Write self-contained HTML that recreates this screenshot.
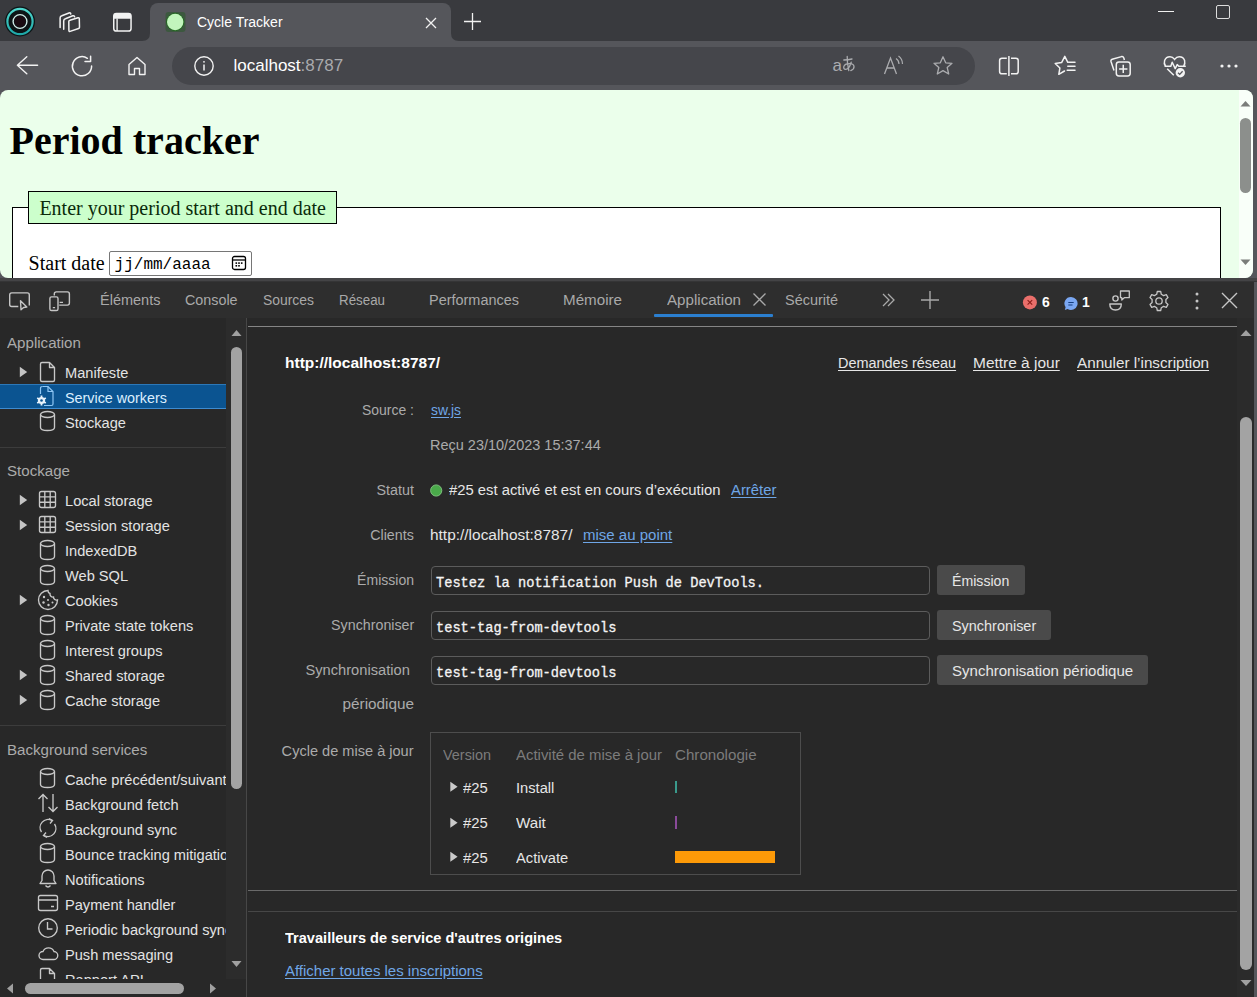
<!DOCTYPE html>
<html><head><meta charset="utf-8"><title>Cycle Tracker</title>
<style>
html,body{margin:0;padding:0;width:1257px;height:997px;overflow:hidden;background:#282828;}
.t{position:absolute;white-space:pre;line-height:1;}
.b{position:absolute;box-sizing:border-box;}
</style></head><body>
<div class="b" style="left:0px;top:0px;width:1257px;height:42px;background:#393a3e;"></div><div class="b" style="left:0px;top:41px;width:1257px;height:49px;background:#55565b;"></div><div class="b" style="left:150px;top:3px;width:301px;height:39px;background:#55565b;border-radius:8px 8px 0 0;"></div><svg class="b" style="left:142px;top:33px;" width="8" height="8" viewBox="0 0 8 8" fill="none"><path d="M0 8 Q8 8 8 0 L8 8 Z" fill="#55565b"/></svg><svg class="b" style="left:451px;top:33px;" width="8" height="8" viewBox="0 0 8 8" fill="none"><path d="M8 8 Q0 8 0 0 L0 8 Z" fill="#55565b"/></svg><svg class="b" style="left:4px;top:6px;" width="32" height="32" viewBox="0 0 32 32" fill="none"><defs><linearGradient id="eg" x1="0" y1="0" x2="0" y2="1"><stop offset="0" stop-color="#4fd6cc"/><stop offset="1" stop-color="#1fa8a8"/></linearGradient></defs><circle cx="16" cy="15.5" r="15" fill="#0c1416"/><circle cx="16" cy="15.5" r="12.6" stroke="url(#eg)" stroke-width="2.2"/><circle cx="16" cy="15.5" r="6.9" stroke="#cfe9e6" stroke-width="1.4"/><circle cx="16" cy="15.5" r="5.5" fill="#1a0b12"/></svg><svg class="b" style="left:55px;top:8px;" width="30" height="28" viewBox="0 0 30 28" fill="none"><g stroke="#f2f2f2" stroke-width="1.5" stroke-linejoin="round" stroke-linecap="round" fill="none"><path d="M5.1 19.6 V10 Q5.1 8.3 6.8 7.8 L14 5 Q15.5 4.5 15.8 6"/><path d="M8.7 21.3 V13 Q8.7 11.2 10.4 10.7 L17.8 7.8 Q19.3 7.3 19.6 8.8"/><path d="M14.9 12.3 L23 9.7 Q24.2 9.4 24.3 10.6 L24.5 19.3 Q24.5 20.2 23.6 20.5 L15.1 23.4 Q13.9 23.8 13.9 22.6 L13.8 13.6 Q13.8 12.6 14.9 12.3 Z"/></g></svg><svg class="b" style="left:112px;top:12px;" width="21" height="21" viewBox="0 0 21 21" fill="none"><rect x="1.75" y="1.45" width="17.3" height="17.6" rx="2.6" stroke="#f2f2f2" stroke-width="1.5"/><path d="M1.75 4 Q1.75 1.45 4.3 1.45 H16.5 Q19.05 1.45 19.05 4 V6.7 H1.75 Z" fill="#f2f2f2"/><path d="M5.1 6.5 V19" stroke="#f2f2f2" stroke-width="1.4"/></svg><svg class="b" style="left:163px;top:10px;" width="25" height="25" viewBox="0 0 25 25" fill="none"><rect x="2.5" y="2" width="20" height="20" rx="3" fill="#1f5a1c" opacity="0.45"/><circle cx="12.2" cy="12" r="9" fill="#1f6a1c"/><circle cx="12.2" cy="12" r="8.2" fill="#c2f5bd"/></svg><div class="t" style="top:14.87px;font-family:'Liberation Sans', sans-serif;font-size:14px;color:#ffffff;left:197.00px;">Cycle Tracker</div><svg class="b" style="left:425px;top:17px;" width="12" height="12" viewBox="0 0 12 12" fill="none"><path d="M1 1 L11 11 M11 1 L1 11" stroke="#f2f2f2" stroke-width="1.3"/></svg><svg class="b" style="left:463px;top:12px;" width="19" height="19" viewBox="0 0 19 19" fill="none"><path d="M9.5 1 V18 M1 9.5 H18" stroke="#f2f2f2" stroke-width="1.3"/></svg><div class="b" style="left:1158px;top:11px;width:16px;height:1px;background:#f0f0f0;"></div><div class="b" style="left:1216px;top:5px;width:14px;height:14px;border:1.3px solid #dcdcdc;border-radius:2px;"></div><svg class="b" style="left:15px;top:54px;" width="24" height="24" viewBox="0 0 24 24" fill="none"><path d="M2.4 11.2 H22.6 M2.4 11.2 L11.8 2.8 M2.4 11.2 L11.8 19.8" stroke="#f2f2f2" stroke-width="1.4" stroke-linecap="round" stroke-linejoin="round" fill="none"/></svg><svg class="b" style="left:70px;top:54px;" width="24" height="24" viewBox="0 0 24 24" fill="none"><path d="M17.4 4.3 A9.6 9.6 0 1 0 21.6 12" stroke="#f2f2f2" stroke-width="1.5" fill="none" stroke-linecap="round"/><path d="M20.6 2.3 V7.6 H15" stroke="#f2f2f2" stroke-width="1.5" fill="none" stroke-linecap="round" stroke-linejoin="round"/></svg><svg class="b" style="left:125px;top:54px;" width="24" height="24" viewBox="0 0 24 24" fill="none"><path d="M4 10.5 L12 3.5 L20 10.5 V20.5 H14.5 V14.5 H9.5 V20.5 H4 Z" stroke="#f2f2f2" stroke-width="1.4" stroke-linejoin="round" fill="none"/></svg><div class="b" style="left:172px;top:47px;width:803px;height:38px;background:#45464b;border-radius:19px;"></div><svg class="b" style="left:193px;top:55px;" width="22" height="22" viewBox="0 0 22 22" fill="none"><circle cx="11" cy="11" r="9.2" stroke="#f2f2f2" stroke-width="1.4"/><path d="M11 9.5 V15.5" stroke="#f2f2f2" stroke-width="1.5"/><circle cx="11" cy="6.8" r="0.9" fill="#f2f2f2"/></svg><div class="t" style="top:57.27px;font-family:'Liberation Sans', sans-serif;font-size:17px;color:#ffffff;left:233.50px;">localhost<span style="color:#a9aaad">:8787</span></div><div class="t" style="top:57.27px;font-family:'Liberation Sans', sans-serif;font-size:17px;color:#abacaf;left:832.50px;">a</div><svg class="b" style="left:842px;top:55px;" width="14" height="18" viewBox="0 0 14 18" fill="none"><g stroke="#abacaf" stroke-width="1.3" fill="none" stroke-linecap="round"><path d="M1.8 5 Q6 5 10 4"/><path d="M5.2 1.5 Q5 8 6.8 15.5"/><path d="M9.2 7.2 Q7 14.5 3.6 14.3 Q1.3 14.1 1.8 11.6 Q2.6 8.6 7.5 8.6 Q11.8 8.6 12 11.6 Q12.2 14.3 8.8 15.6"/></g></svg><svg class="b" style="left:882px;top:54px;" width="24" height="24" viewBox="0 0 24 24" fill="none"><path d="M2.5 20 L8.5 4 L14.5 20 M5 14 H12" stroke="#abacaf" stroke-width="1.3" fill="none"/><path d="M14 4.5 Q17 6.5 17 10" stroke="#abacaf" stroke-width="1.2" fill="none"/><path d="M16.5 2 Q20.5 5 20.5 10" stroke="#abacaf" stroke-width="1.2" fill="none"/></svg><svg class="b" style="left:931px;top:54px;" width="24" height="24" viewBox="0 0 24 24" fill="none"><path d="M12 2.8 L14.7 8.8 L21 9.3 L16.2 13.5 L17.7 20 L12 16.6 L6.3 20 L7.8 13.5 L3 9.3 L9.3 8.8 Z" stroke="#abacaf" stroke-width="1.3" stroke-linejoin="round" fill="none"/></svg><svg class="b" style="left:997px;top:54px;" width="24" height="24" viewBox="0 0 24 24" fill="none"><path d="M9.8 4.2 H5 Q2.6 4.2 2.6 6.6 V17.4 Q2.6 19.8 5 19.8 H9.8 M14 4.2 H18.8 Q21.2 4.2 21.2 6.6 V17.4 Q21.2 19.8 18.8 19.8 H14" stroke="#f2f2f2" stroke-width="1.5" fill="none"/><path d="M11.9 2 V22" stroke="#f2f2f2" stroke-width="1.5"/></svg><svg class="b" style="left:1050px;top:54px;" width="28" height="24" viewBox="0 0 28 24" fill="none"><path d="M14.5 17 L8.8 20.3 L9.9 14 L5.2 9.5 L11.6 8.6 L14.8 2.4 L17.8 8.3" stroke="#f2f2f2" stroke-width="1.5" stroke-linejoin="round" stroke-linecap="round" fill="none"/><path d="M18.6 8.3 H25 M17.8 12.3 H25 M17.2 16.3 H25" stroke="#f2f2f2" stroke-width="1.5" stroke-linecap="round"/></svg><svg class="b" style="left:1106px;top:52px;" width="28" height="28" viewBox="0 0 28 28" fill="none"><path d="M8 18.5 L5 9.5 Q4.5 7.8 6.2 7.3 L15.5 4.6 Q17.2 4.2 17.8 5.9 L18.4 8" stroke="#f2f2f2" stroke-width="1.5" stroke-linejoin="round" fill="none"/><rect x="10.3" y="9.9" width="13.9" height="14" rx="2.6" stroke="#f2f2f2" stroke-width="1.5"/><path d="M17.25 12.8 V21 M13.1 16.9 H21.4" stroke="#f2f2f2" stroke-width="1.5"/></svg><svg class="b" style="left:1160px;top:52px;" width="28" height="26" viewBox="0 0 28 26" fill="none"><path d="M5.6 14.3 Q3.6 11.6 4.6 8.6 Q6 4.8 10 4.8 Q12.6 4.8 14.6 7.4 Q16.6 4.8 19.2 4.8 Q23.4 4.8 24.6 8.6 Q25.4 11.6 23.6 14.3" stroke="#f2f2f2" stroke-width="1.5" fill="none"/><path d="M4.6 14.3 H10.8 L12.2 10.2 L15.2 16.6 L17.2 12.6 L18.8 14.3 H25.8" stroke="#f2f2f2" stroke-width="1.5" stroke-linejoin="round" fill="none"/><path d="M7.2 16.8 L13.8 23.2" stroke="#f2f2f2" stroke-width="1.5"/><circle cx="20.3" cy="20.7" r="5.6" fill="#55565b"/><circle cx="20.3" cy="20.7" r="4.7" fill="#f2f2f2"/><path d="M18 20.8 L19.7 22.4 L22.6 19.2" stroke="#55565b" stroke-width="1.3" fill="none"/></svg><svg class="b" style="left:1220px;top:64px;" width="4" height="4" viewBox="0 0 4 4" fill="none"><circle cx="2" cy="2" r="1.6" fill="#f2f2f2"/></svg><svg class="b" style="left:1227px;top:64px;" width="4" height="4" viewBox="0 0 4 4" fill="none"><circle cx="2" cy="2" r="1.6" fill="#f2f2f2"/></svg><svg class="b" style="left:1234px;top:64px;" width="4" height="4" viewBox="0 0 4 4" fill="none"><circle cx="2" cy="2" r="1.6" fill="#f2f2f2"/></svg><div class="b" style="left:0px;top:90px;width:1257px;height:192px;background:#55565b;"></div><div style="position:absolute;left:0;top:0;width:1253px;height:278px;clip-path:inset(90px 0 0 0 round 8px);"><div class="b" style="left:0px;top:90px;width:1253px;height:188px;background:#ebffeb;"></div><div class="t" style="top:121.00px;font-family:'Liberation Serif', serif;font-size:40px;color:#000000;font-weight:700;left:9.50px;">Period tracker</div><div class="b" style="left:12px;top:207px;width:1209px;height:83px;background:#ffffff;border:1px solid #000000;border-bottom:none;"></div><div class="b" style="left:28px;top:191px;width:309px;height:33px;background:#ccffcc;border:1px solid #000000;"></div><div class="t" style="top:197.50px;font-family:'Liberation Serif', serif;font-size:20px;color:#0a2a0a;left:39.40px;">Enter your period start and end date</div><div class="t" style="top:252.50px;font-family:'Liberation Serif', serif;font-size:20px;color:#000000;left:28.60px;">Start date</div><div class="b" style="left:109px;top:251px;width:143px;height:25px;background:#ffffff;border:1px solid #767676;border-radius:2px;"></div><div class="t" style="top:257.27px;font-family:'Liberation Mono', monospace;font-size:16px;color:#000000;left:114.60px;">jj/mm/aaaa</div><svg class="b" style="left:230px;top:254px;" width="18" height="18" viewBox="0 0 18 18" fill="none"><rect x="2.5" y="2.5" width="13" height="13" rx="2" stroke="#000" stroke-width="1.3"/><path d="M2.5 6 H15.5" stroke="#000" stroke-width="1.3"/><g fill="#000"><rect x="5.5" y="8.3" width="1.6" height="1.6"/><rect x="8.2" y="8.3" width="1.6" height="1.6"/><rect x="10.9" y="8.3" width="1.6" height="1.6"/><rect x="5.5" y="11" width="1.6" height="1.6"/><rect x="8.2" y="11" width="1.6" height="1.6"/></g></svg><div class="b" style="left:1239px;top:90px;width:14px;height:188px;background:#f9fff9;border-radius:0 8px 8px 0;"></div><div class="b" style="left:1240px;top:118px;width:11px;height:75px;background:#8c8f8c;border-radius:6px;"></div><svg class="b" style="left:1240px;top:100px;" width="11" height="8" viewBox="0 0 11 8" fill="none"><path d="M0.5 6.5 L5.5 1 L10.5 6.5 Z" fill="#7a7d7a"/></svg><svg class="b" style="left:1240px;top:258px;" width="11" height="8" viewBox="0 0 11 8" fill="none"><path d="M0.5 1.5 L5.5 7 L10.5 1.5 Z" fill="#7a7d7a"/></svg></div><div class="b" style="left:0px;top:278px;width:1257px;height:5px;background:#353536;"></div><div class="b" style="left:0px;top:278px;width:1257px;height:3px;background:#444446;"></div><div class="b" style="left:0px;top:282px;width:1257px;height:36px;background:#2e2e2e;"></div><svg class="b" style="left:8px;top:290px;" width="24" height="24" viewBox="0 0 24 24" fill="none"><path d="M10.3 16.5 H3.7 Q1.7 16.5 1.7 14.5 V4.9 Q1.7 2.9 3.7 2.9 H19.3 Q21.3 2.9 21.3 4.9 V15.5" stroke="#c6c6c6" stroke-width="1.4" fill="none"/><path d="M12.5 10.8 L18.8 17 L15.6 17.5 L13 19.8 Z" stroke="#c6c6c6" stroke-width="1.4" stroke-linejoin="round" fill="none"/></svg><svg class="b" style="left:48px;top:290px;" width="24" height="24" viewBox="0 0 24 24" fill="none"><path d="M6.3 5.5 V3.9 Q6.3 1.9 8.3 1.9 H19.4 Q21.4 1.9 21.4 3.9 V13.1 Q21.4 15.1 19.4 15.1 H11.2" stroke="#c6c6c6" stroke-width="1.4" fill="none"/><rect x="1.9" y="6.9" width="8.1" height="13.6" rx="1.6" stroke="#c6c6c6" stroke-width="1.4"/><path d="M4.8 17.6 H7.1 M11.6 12.3 H15" stroke="#c6c6c6" stroke-width="1.3"/></svg><div class="t" style="top:292.17px;font-family:'Liberation Sans', sans-serif;font-size:15.5px;color:#a9a9a9;transform:scaleX(0.9348);transform-origin:left center;left:100.00px;">Éléments</div><div class="t" style="top:292.17px;font-family:'Liberation Sans', sans-serif;font-size:15.5px;color:#a9a9a9;transform:scaleX(0.9249);transform-origin:left center;left:185.40px;">Console</div><div class="t" style="top:292.17px;font-family:'Liberation Sans', sans-serif;font-size:15.5px;color:#a9a9a9;transform:scaleX(0.8969);transform-origin:left center;left:263.00px;">Sources</div><div class="t" style="top:292.17px;font-family:'Liberation Sans', sans-serif;font-size:15.5px;color:#a9a9a9;transform:scaleX(0.8610);transform-origin:left center;left:339.00px;">Réseau</div><div class="t" style="top:292.17px;font-family:'Liberation Sans', sans-serif;font-size:15.5px;color:#a9a9a9;transform:scaleX(0.9328);transform-origin:left center;left:429.00px;">Performances</div><div class="t" style="top:292.17px;font-family:'Liberation Sans', sans-serif;font-size:15.5px;color:#a9a9a9;transform:scaleX(0.9786);transform-origin:left center;left:563.00px;">Mémoire</div><div class="t" style="top:292.17px;font-family:'Liberation Sans', sans-serif;font-size:15.5px;color:#a9a9a9;transform:scaleX(0.9759);transform-origin:left center;left:667.00px;">Application</div><div class="t" style="top:292.17px;font-family:'Liberation Sans', sans-serif;font-size:15.5px;color:#a9a9a9;transform:scaleX(0.9321);transform-origin:left center;left:785.00px;">Sécurité</div><svg class="b" style="left:752px;top:292px;" width="15" height="15" viewBox="0 0 15 15" fill="none"><path d="M1.5 1.5 L13.5 13.5 M13.5 1.5 L1.5 13.5" stroke="#a9a9a9" stroke-width="1.3"/></svg><div class="b" style="left:654px;top:314px;width:119px;height:3px;background:#2b7fd0;border-radius:1px;"></div><svg class="b" style="left:880px;top:292px;" width="18" height="16" viewBox="0 0 18 16" fill="none"><path d="M3 2 L9 8 L3 14 M8 2 L14 8 L8 14" stroke="#a9a9a9" stroke-width="1.3" fill="none"/></svg><svg class="b" style="left:920px;top:290px;" width="20" height="20" viewBox="0 0 20 20" fill="none"><path d="M10 1 V19 M1 10 H19" stroke="#a9a9a9" stroke-width="1.4"/></svg><svg class="b" style="left:1022px;top:295px;" width="16" height="16" viewBox="0 0 16 16" fill="none"><circle cx="7.9" cy="7.4" r="7" fill="#ea6f6b"/><path d="M5.6 5.1 L10.2 9.7 M10.2 5.1 L5.6 9.7" stroke="#8a1c18" stroke-width="1.1"/></svg><div class="t" style="top:293.57px;font-family:'Liberation Sans', sans-serif;font-size:15.5px;color:#ffffff;font-weight:700;transform:scaleX(0.9000);transform-origin:left center;left:1041.50px;">6</div><svg class="b" style="left:1063px;top:296px;" width="16" height="16" viewBox="0 0 16 16" fill="none"><path d="M8 1 A6.5 6.5 0 1 1 4.6 13 L1.8 14 L2.6 11.2 A6.5 6.5 0 0 1 8 1 Z" fill="#7aa7f2"/><path d="M5.3 6.5 H10.7 M5.3 9 H9.5" stroke="#153e80" stroke-width="1.2"/></svg><div class="t" style="top:293.57px;font-family:'Liberation Sans', sans-serif;font-size:15.5px;color:#ffffff;font-weight:700;transform:scaleX(0.9000);transform-origin:left center;left:1081.50px;">1</div><svg class="b" style="left:1108px;top:289px;" width="24" height="24" viewBox="0 0 24 24" fill="none"><circle cx="7.5" cy="9.5" r="2.6" stroke="#c6c6c6" stroke-width="1.4"/><path d="M1.8 15 H13.3 Q13.3 21 7.5 21 Q1.8 21 1.8 15 Z" stroke="#c6c6c6" stroke-width="1.4" stroke-linejoin="round" fill="none"/><path d="M12.5 2 H21.3 V8.7 H16.3 L13.8 11 V8.7 H12.5 Z" stroke="#c6c6c6" stroke-width="1.3" stroke-linejoin="round" fill="none"/></svg><svg class="b" style="left:1147px;top:289px;" width="24" height="24" viewBox="0 0 24 24" fill="none"><path d="M10.3 2.5 H13.7 L14.3 5.3 L16.6 6.6 L19.3 5.7 L21 8.6 L18.9 10.5 V13.5 L21 15.4 L19.3 18.3 L16.6 17.4 L14.3 18.7 L13.7 21.5 H10.3 L9.7 18.7 L7.4 17.4 L4.7 18.3 L3 15.4 L5.1 13.5 V10.5 L3 8.6 L4.7 5.7 L7.4 6.6 L9.7 5.3 Z" stroke="#c6c6c6" stroke-width="1.3" stroke-linejoin="round" fill="none"/><circle cx="12" cy="12" r="3.2" stroke="#c6c6c6" stroke-width="1.3"/></svg><svg class="b" style="left:1195px;top:292px;" width="4" height="4" viewBox="0 0 4 4" fill="none"><circle cx="2" cy="2" r="1.5" fill="#c6c6c6"/></svg><svg class="b" style="left:1195px;top:299px;" width="4" height="4" viewBox="0 0 4 4" fill="none"><circle cx="2" cy="2" r="1.5" fill="#c6c6c6"/></svg><svg class="b" style="left:1195px;top:306px;" width="4" height="4" viewBox="0 0 4 4" fill="none"><circle cx="2" cy="2" r="1.5" fill="#c6c6c6"/></svg><svg class="b" style="left:1221px;top:292px;" width="17" height="17" viewBox="0 0 17 17" fill="none"><path d="M1 1 L16 16 M16 1 L1 16" stroke="#c6c6c6" stroke-width="1.4"/></svg><div class="b" style="left:0px;top:318px;width:246px;height:679px;background:#282828;"></div><div class="b" style="left:246px;top:318px;width:1px;height:679px;background:#474747;"></div><div style="position:absolute;left:0;top:318px;width:226px;height:661px;overflow:hidden;"><div style="position:absolute;left:0;top:-318px;width:226px;height:997px;"><div class="t" style="top:335.43px;font-family:'Liberation Sans', sans-serif;font-size:15.2px;color:#ababab;transform:scaleX(0.9950);transform-origin:left center;left:6.80px;">Application</div><svg class="b" style="left:18px;top:365.7px;" width="10" height="12" viewBox="0 0 10 12" fill="none"><path d="M1.8 0.8 L9.2 6 L1.8 11.2 Z" fill="#c4c4c4"/></svg><svg class="b" style="left:38px;top:360.7px;" width="20" height="22" viewBox="0 0 20 22" fill="none"><path d="M4 1.5 H11.5 L16.5 6.5 V19 Q16.5 20.5 15 20.5 H4 Q2.5 20.5 2.5 19 V3 Q2.5 1.5 4 1.5 Z M11.5 1.5 V6.5 H16.5" stroke="#c8c8c8" stroke-width="1.35" stroke-linejoin="round" fill="none"/></svg><div class="t" style="top:365.33px;font-family:'Liberation Sans', sans-serif;font-size:15.2px;color:#e3e3e3;transform:scaleX(0.9620);transform-origin:left center;left:64.60px;">Manifeste</div><div class="b" style="left:0px;top:384px;width:227px;height:25px;background:#0b5491;border-top:1px solid #2c78b8;border-bottom:1px solid #3d8bd0;"></div><svg class="b" style="left:35px;top:385px;" width="22" height="23" viewBox="0 0 22 23" fill="none"><path d="M7.5 1.5 H13 L18 6.5 V19 Q18 20.5 16.5 20.5 H9" stroke="#8fc7f5" stroke-width="1.2" fill="none"/><path d="M7.5 1.5 Q5.5 1.5 5.5 3.5 V9" stroke="#8fc7f5" stroke-width="1.2" fill="none"/><path d="M13 1.5 V6.5 H18" stroke="#8fc7f5" stroke-width="1.2" fill="none"/><circle cx="6.5" cy="15.5" r="3.6" fill="#e8f2fb"/><g stroke="#e8f2fb" stroke-width="1.8"><path d="M6.5 10.5 V20.5 M2.2 13 L10.8 18 M2.2 18 L10.8 13"/></g><circle cx="6.5" cy="15.5" r="1.3" fill="#0b5491"/></svg><div class="t" style="top:390.13px;font-family:'Liberation Sans', sans-serif;font-size:15.2px;color:#dcefff;transform:scaleX(0.9434);transform-origin:left center;left:64.60px;">Service workers</div><svg class="b" style="left:38px;top:410px;" width="20" height="22" viewBox="0 0 20 22" fill="none"><ellipse cx="9.5" cy="4.5" rx="7" ry="3" stroke="#c8c8c8" stroke-width="1.35"/><path d="M2.5 4.5 V17.5 Q2.5 20.5 9.5 20.5 Q16.5 20.5 16.5 17.5 V4.5" stroke="#c8c8c8" stroke-width="1.35" fill="none"/></svg><div class="t" style="top:414.63px;font-family:'Liberation Sans', sans-serif;font-size:15.2px;color:#e3e3e3;transform:scaleX(0.9620);transform-origin:left center;left:64.60px;">Stockage</div><div class="b" style="left:0px;top:447px;width:227px;height:1px;background:#3c3c3c;"></div><div class="t" style="top:463.43px;font-family:'Liberation Sans', sans-serif;font-size:15.2px;color:#ababab;transform:scaleX(0.9950);transform-origin:left center;left:6.80px;">Stockage</div><svg class="b" style="left:18px;top:493.6px;" width="10" height="12" viewBox="0 0 10 12" fill="none"><path d="M1.8 0.8 L9.2 6 L1.8 11.2 Z" fill="#c4c4c4"/></svg><svg class="b" style="left:38px;top:489.6px;" width="20" height="20" viewBox="0 0 20 20" fill="none"><rect x="1.5" y="1.5" width="16" height="16" rx="2" stroke="#c8c8c8" stroke-width="1.35"/><path d="M1.5 6.8 H17.5 M1.5 12.2 H17.5 M6.8 1.5 V17.5 M12.2 1.5 V17.5" stroke="#c8c8c8" stroke-width="1.35"/></svg><div class="t" style="top:493.23px;font-family:'Liberation Sans', sans-serif;font-size:15.2px;color:#e3e3e3;transform:scaleX(0.9620);transform-origin:left center;left:64.60px;">Local storage</div><svg class="b" style="left:18px;top:518.6px;" width="10" height="12" viewBox="0 0 10 12" fill="none"><path d="M1.8 0.8 L9.2 6 L1.8 11.2 Z" fill="#c4c4c4"/></svg><svg class="b" style="left:38px;top:514.6px;" width="20" height="20" viewBox="0 0 20 20" fill="none"><rect x="1.5" y="1.5" width="16" height="16" rx="2" stroke="#c8c8c8" stroke-width="1.35"/><path d="M1.5 6.8 H17.5 M1.5 12.2 H17.5 M6.8 1.5 V17.5 M12.2 1.5 V17.5" stroke="#c8c8c8" stroke-width="1.35"/></svg><div class="t" style="top:518.23px;font-family:'Liberation Sans', sans-serif;font-size:15.2px;color:#e3e3e3;transform:scaleX(0.9620);transform-origin:left center;left:64.60px;">Session storage</div><svg class="b" style="left:38px;top:538.6px;" width="20" height="22" viewBox="0 0 20 22" fill="none"><ellipse cx="9.5" cy="4.5" rx="7" ry="3" stroke="#c8c8c8" stroke-width="1.35"/><path d="M2.5 4.5 V17.5 Q2.5 20.5 9.5 20.5 Q16.5 20.5 16.5 17.5 V4.5" stroke="#c8c8c8" stroke-width="1.35" fill="none"/></svg><div class="t" style="top:543.23px;font-family:'Liberation Sans', sans-serif;font-size:15.2px;color:#e3e3e3;transform:scaleX(0.9620);transform-origin:left center;left:64.60px;">IndexedDB</div><svg class="b" style="left:38px;top:563.6px;" width="20" height="22" viewBox="0 0 20 22" fill="none"><ellipse cx="9.5" cy="4.5" rx="7" ry="3" stroke="#c8c8c8" stroke-width="1.35"/><path d="M2.5 4.5 V17.5 Q2.5 20.5 9.5 20.5 Q16.5 20.5 16.5 17.5 V4.5" stroke="#c8c8c8" stroke-width="1.35" fill="none"/></svg><div class="t" style="top:568.23px;font-family:'Liberation Sans', sans-serif;font-size:15.2px;color:#e3e3e3;transform:scaleX(0.9620);transform-origin:left center;left:64.60px;">Web SQL</div><svg class="b" style="left:18px;top:593.6px;" width="10" height="12" viewBox="0 0 10 12" fill="none"><path d="M1.8 0.8 L9.2 6 L1.8 11.2 Z" fill="#c4c4c4"/></svg><svg class="b" style="left:37px;top:588.6px;" width="22" height="22" viewBox="0 0 22 22" fill="none"><path d="M11 1.5 A9.5 9.5 0 1 0 20.5 11 A3 3 0 0 1 16.5 8 A3 3 0 0 1 13 4.5 A3 3 0 0 1 11 1.5 Z" stroke="#c8c8c8" stroke-width="1.35" fill="none"/><g fill="#c8c8c8"><circle cx="7" cy="8" r="1.2"/><circle cx="6.5" cy="13.5" r="1.2"/><circle cx="11" cy="11" r="1"/><circle cx="11.5" cy="16" r="1.2"/><circle cx="15.5" cy="13.5" r="1"/></g></svg><div class="t" style="top:593.23px;font-family:'Liberation Sans', sans-serif;font-size:15.2px;color:#e3e3e3;transform:scaleX(0.9620);transform-origin:left center;left:64.60px;">Cookies</div><svg class="b" style="left:38px;top:613.6px;" width="20" height="22" viewBox="0 0 20 22" fill="none"><ellipse cx="9.5" cy="4.5" rx="7" ry="3" stroke="#c8c8c8" stroke-width="1.35"/><path d="M2.5 4.5 V17.5 Q2.5 20.5 9.5 20.5 Q16.5 20.5 16.5 17.5 V4.5" stroke="#c8c8c8" stroke-width="1.35" fill="none"/></svg><div class="t" style="top:618.23px;font-family:'Liberation Sans', sans-serif;font-size:15.2px;color:#e3e3e3;transform:scaleX(0.9620);transform-origin:left center;left:64.60px;">Private state tokens</div><svg class="b" style="left:38px;top:638.6px;" width="20" height="22" viewBox="0 0 20 22" fill="none"><ellipse cx="9.5" cy="4.5" rx="7" ry="3" stroke="#c8c8c8" stroke-width="1.35"/><path d="M2.5 4.5 V17.5 Q2.5 20.5 9.5 20.5 Q16.5 20.5 16.5 17.5 V4.5" stroke="#c8c8c8" stroke-width="1.35" fill="none"/></svg><div class="t" style="top:643.23px;font-family:'Liberation Sans', sans-serif;font-size:15.2px;color:#e3e3e3;transform:scaleX(0.9620);transform-origin:left center;left:64.60px;">Interest groups</div><svg class="b" style="left:18px;top:668.6px;" width="10" height="12" viewBox="0 0 10 12" fill="none"><path d="M1.8 0.8 L9.2 6 L1.8 11.2 Z" fill="#c4c4c4"/></svg><svg class="b" style="left:38px;top:663.6px;" width="20" height="22" viewBox="0 0 20 22" fill="none"><ellipse cx="9.5" cy="4.5" rx="7" ry="3" stroke="#c8c8c8" stroke-width="1.35"/><path d="M2.5 4.5 V17.5 Q2.5 20.5 9.5 20.5 Q16.5 20.5 16.5 17.5 V4.5" stroke="#c8c8c8" stroke-width="1.35" fill="none"/></svg><div class="t" style="top:668.23px;font-family:'Liberation Sans', sans-serif;font-size:15.2px;color:#e3e3e3;transform:scaleX(0.9620);transform-origin:left center;left:64.60px;">Shared storage</div><svg class="b" style="left:18px;top:693.6px;" width="10" height="12" viewBox="0 0 10 12" fill="none"><path d="M1.8 0.8 L9.2 6 L1.8 11.2 Z" fill="#c4c4c4"/></svg><svg class="b" style="left:38px;top:688.6px;" width="20" height="22" viewBox="0 0 20 22" fill="none"><ellipse cx="9.5" cy="4.5" rx="7" ry="3" stroke="#c8c8c8" stroke-width="1.35"/><path d="M2.5 4.5 V17.5 Q2.5 20.5 9.5 20.5 Q16.5 20.5 16.5 17.5 V4.5" stroke="#c8c8c8" stroke-width="1.35" fill="none"/></svg><div class="t" style="top:693.23px;font-family:'Liberation Sans', sans-serif;font-size:15.2px;color:#e3e3e3;transform:scaleX(0.9620);transform-origin:left center;left:64.60px;">Cache storage</div><div class="b" style="left:0px;top:725px;width:227px;height:1px;background:#3c3c3c;"></div><div class="t" style="top:742.03px;font-family:'Liberation Sans', sans-serif;font-size:15.2px;color:#ababab;transform:scaleX(0.9950);transform-origin:left center;left:6.80px;">Background services</div><svg class="b" style="left:38px;top:767.4px;" width="20" height="22" viewBox="0 0 20 22" fill="none"><ellipse cx="9.5" cy="4.5" rx="7" ry="3" stroke="#c8c8c8" stroke-width="1.35"/><path d="M2.5 4.5 V17.5 Q2.5 20.5 9.5 20.5 Q16.5 20.5 16.5 17.5 V4.5" stroke="#c8c8c8" stroke-width="1.35" fill="none"/></svg><div class="t" style="top:772.03px;font-family:'Liberation Sans', sans-serif;font-size:15.2px;color:#e3e3e3;transform:scaleX(0.9620);transform-origin:left center;left:64.60px;">Cache précédent/suivant</div><svg class="b" style="left:37px;top:792.4px;" width="22" height="22" viewBox="0 0 22 22" fill="none"><path d="M6 20 V2.5 M1.5 7 L6 2.5 L10.5 7 M16 2 V19.5 M11.5 15 L16 19.5 L20.5 15" stroke="#c8c8c8" stroke-width="1.35" fill="none"/></svg><div class="t" style="top:797.03px;font-family:'Liberation Sans', sans-serif;font-size:15.2px;color:#e3e3e3;transform:scaleX(0.9620);transform-origin:left center;left:64.60px;">Background fetch</div><svg class="b" style="left:37px;top:817.4px;" width="22" height="22" viewBox="0 0 22 22" fill="none"><path d="M4.5 15 A8 8 0 0 1 15 3.5 M17.5 7 A8 8 0 0 1 7 18.5" stroke="#c8c8c8" stroke-width="1.35" fill="none"/><path d="M12 1.5 L15.5 3.5 L13 6.5 M10 20.5 L6.5 18.5 L9 15.5" stroke="#c8c8c8" stroke-width="1.35" fill="none"/></svg><div class="t" style="top:822.03px;font-family:'Liberation Sans', sans-serif;font-size:15.2px;color:#e3e3e3;transform:scaleX(0.9620);transform-origin:left center;left:64.60px;">Background sync</div><svg class="b" style="left:38px;top:842.4px;" width="20" height="22" viewBox="0 0 20 22" fill="none"><ellipse cx="9.5" cy="4.5" rx="7" ry="3" stroke="#c8c8c8" stroke-width="1.35"/><path d="M2.5 4.5 V17.5 Q2.5 20.5 9.5 20.5 Q16.5 20.5 16.5 17.5 V4.5" stroke="#c8c8c8" stroke-width="1.35" fill="none"/></svg><div class="t" style="top:847.03px;font-family:'Liberation Sans', sans-serif;font-size:15.2px;color:#e3e3e3;transform:scaleX(0.9620);transform-origin:left center;left:64.60px;">Bounce tracking mitigations</div><svg class="b" style="left:37px;top:867.4px;" width="22" height="22" viewBox="0 0 22 22" fill="none"><path d="M3 16.5 H19 L17 13.5 V9 A6 6 0 0 0 5 9 V13.5 Z" stroke="#c8c8c8" stroke-width="1.35" stroke-linejoin="round" fill="none"/><path d="M8.5 18.5 Q11 21.5 13.5 18.5" stroke="#c8c8c8" stroke-width="1.35" fill="none"/></svg><div class="t" style="top:872.03px;font-family:'Liberation Sans', sans-serif;font-size:15.2px;color:#e3e3e3;transform:scaleX(0.9620);transform-origin:left center;left:64.60px;">Notifications</div><svg class="b" style="left:37px;top:892.4px;" width="22" height="22" viewBox="0 0 22 22" fill="none"><rect x="1.5" y="3.5" width="19" height="15" rx="2" stroke="#c8c8c8" stroke-width="1.35"/><path d="M1.5 8 H20.5 M14 14.5 H17" stroke="#c8c8c8" stroke-width="1.35"/></svg><div class="t" style="top:897.03px;font-family:'Liberation Sans', sans-serif;font-size:15.2px;color:#e3e3e3;transform:scaleX(0.9620);transform-origin:left center;left:64.60px;">Payment handler</div><svg class="b" style="left:37px;top:917.4px;" width="22" height="22" viewBox="0 0 22 22" fill="none"><circle cx="11" cy="11" r="9.3" stroke="#c8c8c8" stroke-width="1.35"/><path d="M10.5 5 V12 H15.5" stroke="#c8c8c8" stroke-width="1.35" fill="none"/></svg><div class="t" style="top:922.03px;font-family:'Liberation Sans', sans-serif;font-size:15.2px;color:#e3e3e3;transform:scaleX(0.9620);transform-origin:left center;left:64.60px;">Periodic background sync</div><svg class="b" style="left:37px;top:942.4px;" width="22" height="22" viewBox="0 0 22 22" fill="none"><path d="M6 17.5 H16.5 A4 4 0 0 0 17 9.5 A6 6 0 0 0 6 9.5 A4 4 0 0 0 6 17.5 Z" stroke="#c8c8c8" stroke-width="1.35" fill="none"/></svg><div class="t" style="top:947.03px;font-family:'Liberation Sans', sans-serif;font-size:15.2px;color:#e3e3e3;transform:scaleX(0.9620);transform-origin:left center;left:64.60px;">Push messaging</div><svg class="b" style="left:38px;top:967.4px;" width="20" height="22" viewBox="0 0 20 22" fill="none"><path d="M4 1.5 H11.5 L16.5 6.5 V19 Q16.5 20.5 15 20.5 H4 Q2.5 20.5 2.5 19 V3 Q2.5 1.5 4 1.5 Z M11.5 1.5 V6.5 H16.5" stroke="#c8c8c8" stroke-width="1.35" stroke-linejoin="round" fill="none"/></svg><div class="t" style="top:972.03px;font-family:'Liberation Sans', sans-serif;font-size:15.2px;color:#e3e3e3;transform:scaleX(0.9620);transform-origin:left center;left:64.60px;">Rapport API</div></div></div><div class="b" style="left:226px;top:318px;width:20px;height:661px;background:#2c2c2c;"></div><svg class="b" style="left:231px;top:329px;" width="11" height="8" viewBox="0 0 11 8" fill="none"><path d="M0.5 7 L5.5 1 L10.5 7 Z" fill="#a0a0a0"/></svg><div class="b" style="left:231px;top:347px;width:11px;height:442px;background:#a3a3a3;border-radius:6px;"></div><svg class="b" style="left:231px;top:960px;" width="11" height="8" viewBox="0 0 11 8" fill="none"><path d="M0.5 1 L5.5 7 L10.5 1 Z" fill="#a0a0a0"/></svg><div class="b" style="left:0px;top:979px;width:246px;height:18px;background:#282828;"></div><div class="b" style="left:25px;top:983px;width:159px;height:11px;background:#a3a3a3;border-radius:6px;"></div><svg class="b" style="left:6px;top:983px;" width="8" height="11" viewBox="0 0 8 11" fill="none"><path d="M7 0.5 L1 5.5 L7 10.5 Z" fill="#a0a0a0"/></svg><svg class="b" style="left:209px;top:983px;" width="8" height="11" viewBox="0 0 8 11" fill="none"><path d="M1 0.5 L7 5.5 L1 10.5 Z" fill="#a0a0a0"/></svg><div class="b" style="left:247px;top:318px;width:1010px;height:679px;background:#282828;"></div><div class="b" style="left:248px;top:326px;width:989px;height:1px;background:#858585;"></div><div class="t" style="top:355.04px;font-family:'Liberation Sans', sans-serif;font-size:15.3px;color:#ffffff;font-weight:700;transform:scaleX(1.0135);transform-origin:left center;left:284.70px;">http://localhost:8787/</div><div class="t" style="top:354.94px;font-family:'Liberation Sans', sans-serif;font-size:15.3px;color:#e6e6e6;text-decoration:underline;text-underline-offset:2px;transform:scaleX(0.9446);transform-origin:left center;left:837.90px;">Demandes réseau</div><div class="t" style="top:354.94px;font-family:'Liberation Sans', sans-serif;font-size:15.3px;color:#e6e6e6;text-decoration:underline;text-underline-offset:2px;transform:scaleX(1.0106);transform-origin:left center;left:973.20px;">Mettre à jour</div><div class="t" style="top:354.94px;font-family:'Liberation Sans', sans-serif;font-size:15.3px;color:#e6e6e6;text-decoration:underline;text-underline-offset:2px;transform:scaleX(0.9957);transform-origin:left center;left:1077.30px;">Annuler l’inscription</div><div class="t" style="top:401.74px;font-family:'Liberation Sans', sans-serif;font-size:15.3px;color:#ababab;transform:scaleX(0.9126);transform-origin:right center;right:843.00px;">Source :</div><div class="t" style="top:401.74px;font-family:'Liberation Sans', sans-serif;font-size:15.3px;color:#6fa6e6;text-decoration:underline;text-underline-offset:2px;transform:scaleX(0.9048);transform-origin:left center;left:431.00px;">sw.js</div><div class="t" style="top:436.74px;font-family:'Liberation Sans', sans-serif;font-size:15.3px;color:#ababab;transform:scaleX(0.9470);transform-origin:left center;left:430.00px;">Reçu 23/10/2023 15:37:44</div><div class="t" style="top:481.74px;font-family:'Liberation Sans', sans-serif;font-size:15.3px;color:#ababab;transform:scaleX(0.9356);transform-origin:right center;right:843.00px;">Statut</div><svg class="b" style="left:430px;top:483.5px;" width="13" height="13" viewBox="0 0 13 13" fill="none"><circle cx="6.2" cy="6.5" r="5.6" fill="#4aaa4a" stroke="#86c886" stroke-width="0.9"/></svg><div class="t" style="top:481.74px;font-family:'Liberation Sans', sans-serif;font-size:15.3px;color:#e6e6e6;transform:scaleX(0.9673);transform-origin:left center;left:448.50px;">#25 est activé et est en cours d’exécution</div><div class="t" style="top:481.74px;font-family:'Liberation Sans', sans-serif;font-size:15.3px;color:#6fa6e6;text-decoration:underline;text-underline-offset:2px;transform:scaleX(0.9709);transform-origin:left center;left:730.60px;">Arrêter</div><div class="t" style="top:526.74px;font-family:'Liberation Sans', sans-serif;font-size:15.3px;color:#ababab;transform:scaleX(0.9323);transform-origin:right center;right:843.00px;">Clients</div><div class="t" style="top:526.74px;font-family:'Liberation Sans', sans-serif;font-size:15.3px;color:#e6e6e6;transform:scaleX(1.0092);transform-origin:left center;left:429.50px;">http://localhost:8787/</div><div class="t" style="top:526.74px;font-family:'Liberation Sans', sans-serif;font-size:15.3px;color:#6fa6e6;text-decoration:underline;text-underline-offset:2px;transform:scaleX(0.9813);transform-origin:left center;left:582.70px;">mise au point</div><div class="t" style="top:571.74px;font-family:'Liberation Sans', sans-serif;font-size:15.3px;color:#ababab;transform:scaleX(0.9183);transform-origin:right center;right:843.00px;">Émission</div><div class="b" style="left:430.5px;top:565.9000000000001px;width:499.5px;height:29.59999999999991px;border:1px solid #5c5c5c;border-radius:4px;background:#282828;"></div><div class="t" style="top:575.93px;font-family:'Liberation Mono', monospace;font-size:14px;color:#f4f4f4;transform:scaleX(0.9761);transform-origin:left center;left:436.00px;-webkit-text-stroke:0.3px #f4f4f4;">Testez la notification Push de DevTools.</div><div class="b" style="left:937px;top:565.2px;width:87.5px;height:29.5px;background:#4a4a4a;border-radius:3px;"></div><div class="t" style="top:573.24px;font-family:'Liberation Sans', sans-serif;font-size:15.3px;color:#e6e6e6;transform:scaleX(0.9232);transform-origin:left center;left:951.70px;">Émission</div><div class="t" style="top:616.74px;font-family:'Liberation Sans', sans-serif;font-size:15.3px;color:#ababab;transform:scaleX(0.9318);transform-origin:right center;right:843.00px;">Synchroniser</div><div class="b" style="left:430.5px;top:610.9000000000001px;width:499.5px;height:29.59999999999991px;border:1px solid #5c5c5c;border-radius:4px;background:#282828;"></div><div class="t" style="top:620.93px;font-family:'Liberation Mono', monospace;font-size:14px;color:#f4f4f4;transform:scaleX(0.9761);transform-origin:left center;left:436.00px;-webkit-text-stroke:0.3px #f4f4f4;">test-tag-from-devtools</div><div class="b" style="left:937px;top:610.2px;width:113.5px;height:29.5px;background:#4a4a4a;border-radius:3px;"></div><div class="t" style="top:618.24px;font-family:'Liberation Sans', sans-serif;font-size:15.3px;color:#e6e6e6;transform:scaleX(0.9430);transform-origin:left center;left:951.70px;">Synchroniser</div><div class="t" style="top:661.74px;font-family:'Liberation Sans', sans-serif;font-size:15.3px;color:#ababab;transform:scaleX(0.9590);transform-origin:right center;right:847.00px;">Synchronisation</div><div class="t" style="top:696.24px;font-family:'Liberation Sans', sans-serif;font-size:15.3px;color:#ababab;right:843.00px;">périodique</div><div class="b" style="left:430.5px;top:655.7px;width:499.5px;height:29.59999999999991px;border:1px solid #5c5c5c;border-radius:4px;background:#282828;"></div><div class="t" style="top:665.73px;font-family:'Liberation Mono', monospace;font-size:14px;color:#f4f4f4;transform:scaleX(0.9761);transform-origin:left center;left:436.00px;-webkit-text-stroke:0.3px #f4f4f4;">test-tag-from-devtools</div><div class="b" style="left:937px;top:655.0px;width:210.5px;height:29.5px;background:#4a4a4a;border-radius:3px;"></div><div class="t" style="top:663.04px;font-family:'Liberation Sans', sans-serif;font-size:15.3px;color:#e6e6e6;transform:scaleX(0.9817);transform-origin:left center;left:951.70px;">Synchronisation périodique</div><div class="t" style="top:742.74px;font-family:'Liberation Sans', sans-serif;font-size:15.3px;color:#ababab;transform:scaleX(0.9523);transform-origin:right center;right:843.00px;">Cycle de mise à jour</div><div class="b" style="left:430px;top:732px;width:371px;height:143px;border:1px solid #4d4d4d;"></div><div class="t" style="top:747.24px;font-family:'Liberation Sans', sans-serif;font-size:15.3px;color:#7c7c7c;transform:scaleX(0.9425);transform-origin:left center;left:443.30px;">Version</div><div class="t" style="top:747.24px;font-family:'Liberation Sans', sans-serif;font-size:15.3px;color:#7c7c7c;transform:scaleX(0.9755);transform-origin:left center;left:516.00px;">Activité de mise à jour</div><div class="t" style="top:747.24px;font-family:'Liberation Sans', sans-serif;font-size:15.3px;color:#7c7c7c;transform:scaleX(0.9890);transform-origin:left center;left:675.00px;">Chronologie</div><svg class="b" style="left:449px;top:781.3px;" width="10" height="12" viewBox="0 0 10 12" fill="none"><path d="M1.3 0.8 L8.6 5.8 L1.3 10.8 Z" fill="#cacaca"/></svg><div class="t" style="top:780.04px;font-family:'Liberation Sans', sans-serif;font-size:15.3px;color:#e6e6e6;transform:scaleX(0.9715);transform-origin:left center;left:462.80px;">#25</div><div class="t" style="top:780.04px;font-family:'Liberation Sans', sans-serif;font-size:15.3px;color:#e6e6e6;transform:scaleX(0.9582);transform-origin:left center;left:516.00px;">Install</div><svg class="b" style="left:449px;top:816.5px;" width="10" height="12" viewBox="0 0 10 12" fill="none"><path d="M1.3 0.8 L8.6 5.8 L1.3 10.8 Z" fill="#cacaca"/></svg><div class="t" style="top:815.24px;font-family:'Liberation Sans', sans-serif;font-size:15.3px;color:#e6e6e6;transform:scaleX(0.9715);transform-origin:left center;left:462.80px;">#25</div><div class="t" style="top:815.24px;font-family:'Liberation Sans', sans-serif;font-size:15.3px;color:#e6e6e6;transform:scaleX(0.9889);transform-origin:left center;left:516.00px;">Wait</div><svg class="b" style="left:449px;top:851.3px;" width="10" height="12" viewBox="0 0 10 12" fill="none"><path d="M1.3 0.8 L8.6 5.8 L1.3 10.8 Z" fill="#cacaca"/></svg><div class="t" style="top:850.04px;font-family:'Liberation Sans', sans-serif;font-size:15.3px;color:#e6e6e6;transform:scaleX(0.9715);transform-origin:left center;left:462.80px;">#25</div><div class="t" style="top:850.04px;font-family:'Liberation Sans', sans-serif;font-size:15.3px;color:#e6e6e6;transform:scaleX(0.9610);transform-origin:left center;left:516.00px;">Activate</div><div class="b" style="left:675px;top:781px;width:1.5px;height:12px;background:#3a9a8c;"></div><div class="b" style="left:675px;top:816px;width:1.5px;height:13px;background:#8a4a9a;"></div><div class="b" style="left:675px;top:851px;width:100px;height:12px;background:#fd9a08;"></div><div class="b" style="left:248px;top:890px;width:989px;height:1px;background:#6a6a6a;"></div><div class="b" style="left:248px;top:911px;width:989px;height:1px;background:#474747;"></div><div class="t" style="top:929.94px;font-family:'Liberation Sans', sans-serif;font-size:15.3px;color:#ffffff;font-weight:700;transform:scaleX(0.9526);transform-origin:left center;left:284.70px;">Travailleurs de service d&#x27;autres origines</div><div class="t" style="top:963.24px;font-family:'Liberation Sans', sans-serif;font-size:15.3px;color:#6fa6e6;text-decoration:underline;text-underline-offset:2px;transform:scaleX(0.9781);transform-origin:left center;left:284.70px;">Afficher toutes les inscriptions</div><div class="b" style="left:1237px;top:318px;width:17px;height:679px;background:#2b2b2b;"></div><svg class="b" style="left:1240px;top:329px;" width="12" height="8" viewBox="0 0 12 8" fill="none"><path d="M0.5 7 L6 1 L11.5 7 Z" fill="#a0a0a0"/></svg><div class="b" style="left:1240px;top:417px;width:12px;height:553px;background:#a3a3a3;border-radius:6px;"></div><svg class="b" style="left:1240px;top:979px;" width="12" height="8" viewBox="0 0 12 8" fill="none"><path d="M0.5 1 L6 7 L11.5 1 Z" fill="#a0a0a0"/></svg><div class="b" style="left:1254px;top:282px;width:3px;height:715px;background:#55565b;"></div>
</body></html>
